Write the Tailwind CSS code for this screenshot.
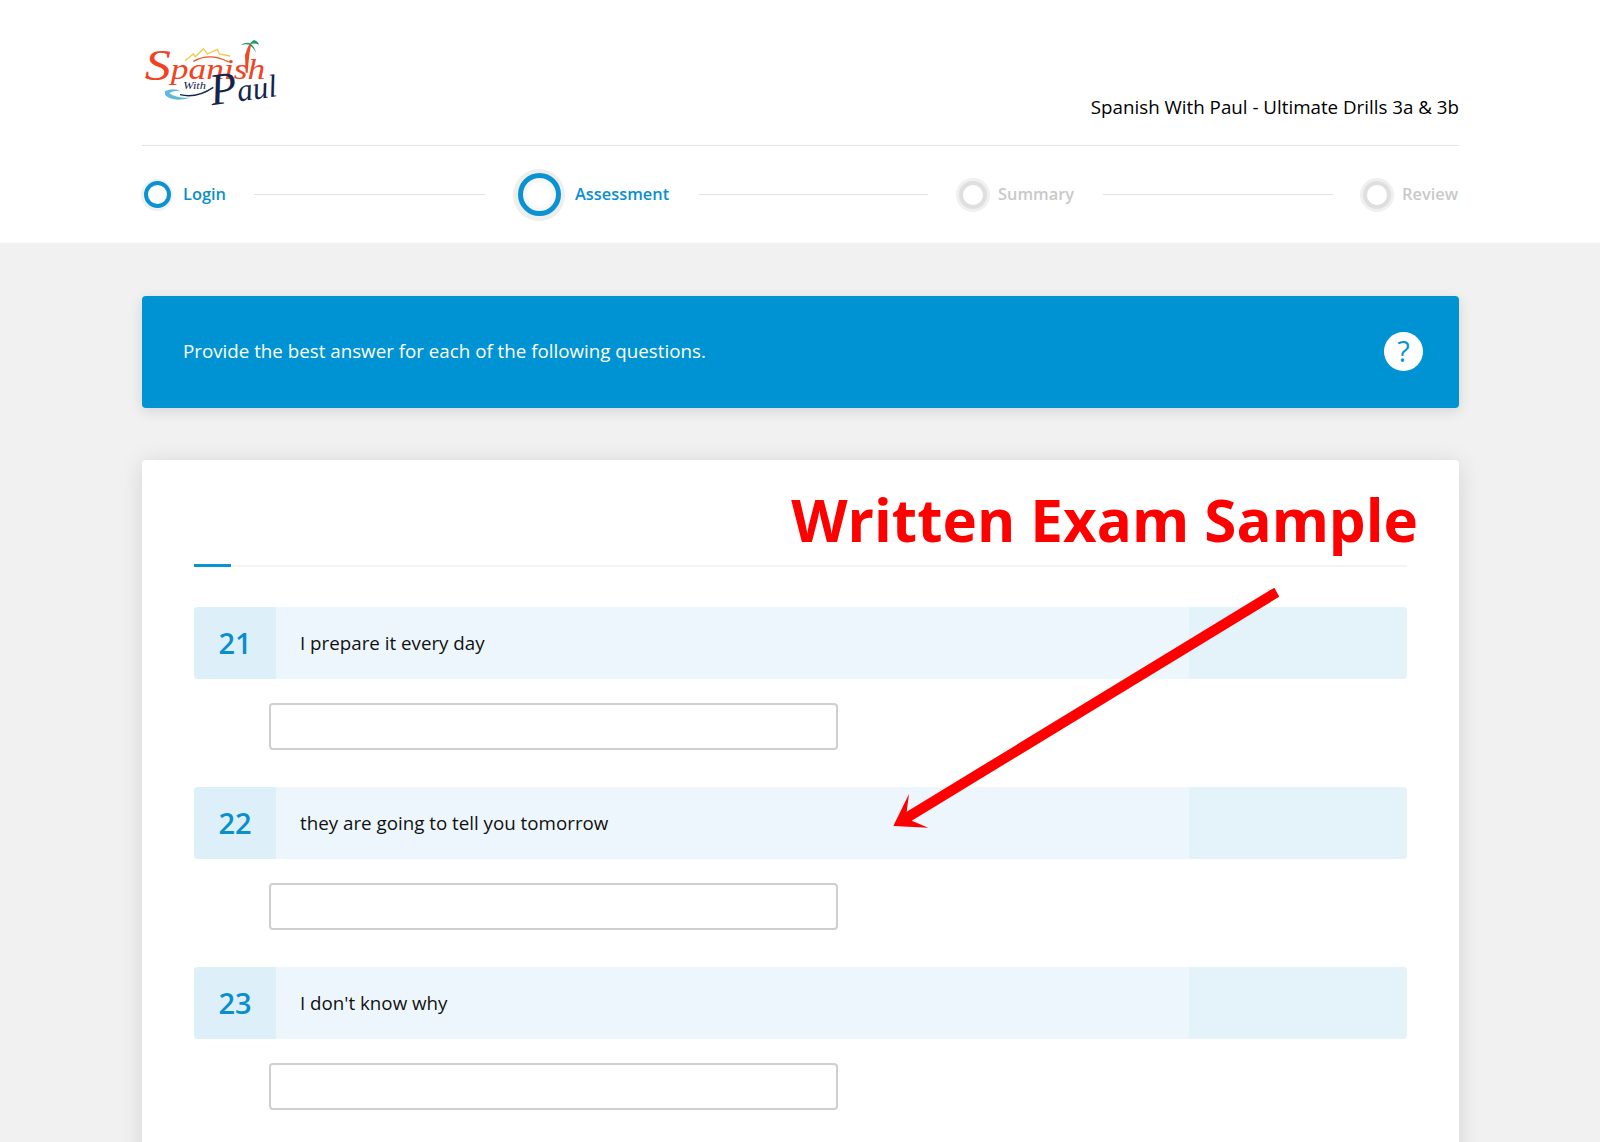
<!DOCTYPE html>
<html lang="en">
<head>
<meta charset="utf-8">
<title>Spanish With Paul</title>
<script src="https://cdn.jsdelivr.net/npm/@tailwindcss/browser@4"></script>
</head>
<body class="h-[1142px] overflow-hidden bg-[#f1f1f1] font-['Open_Sans',sans-serif] text-[#111]">
<header class="bg-white h-[243px]">
  <div class="mx-[142px] w-[1317px]">
    <div class="pt-[30px] h-[146px] border-b border-[#e3e3e3] flex justify-between">
      <svg class="w-[148px] h-[90px]" viewBox="36 0 444 270" aria-label="Spanish With Paul logo">
        <path d="M165 92 L190 72 L196 80 L220 56 L232 72 L262 58 L268 72 L300 78" fill="none" stroke="#f6c945" stroke-width="4"/>
        <path d="M190 94 Q240 66 296 96" fill="none" stroke="#e8552b" stroke-width="4"/>
        <path d="M345 75 Q352 55 359 40 L365 40 Q358 60 353 128 L347 128 Z" fill="#ee4a24"/>
        <path d="M360 40 Q345 34 331 46 Q348 40 358 44 Z M362 38 Q372 28 372 30 Q384 34 387 44 Q374 38 362 42 Z M362 42 Q374 50 378 68 Q370 52 358 46 Z" fill="#1f9a6b"/>
        <text x="44" y="150" font-family="Liberation Serif" font-style="italic" fill="#f0431f" textLength="362" lengthAdjust="spacingAndGlyphs"><tspan font-size="130">S</tspan><tspan font-size="88" dy="-4">panish</tspan></text>
        <text x="160" y="178" font-family="Liberation Serif" font-style="italic" font-size="28" fill="#14254d" textLength="68" lengthAdjust="spacingAndGlyphs">With</text>
        <text x="246" y="226" font-family="Liberation Serif" font-style="italic" fill="#14254d" textLength="200" lengthAdjust="spacingAndGlyphs" transform="rotate(-8 246 226)"><tspan font-size="135">P</tspan><tspan font-size="96">aul</tspan></text>
        <path d="M104 184 Q130 172 152 184 Q130 180 118 190 Q140 206 182 203 Q130 218 106 196 Z" fill="#5fb9d8"/>
        <path d="M150 194 Q200 206 250 172" fill="none" stroke="#14254d" stroke-width="4"/>
      </svg>
      <div class="flex items-end pb-[26px] text-[18.75px] leading-[24px] text-black">Spanish With Paul - Ultimate Drills 3a &amp; 3b</div>
    </div>
    <nav class="h-[97px] flex items-center text-[16.4px] font-semibold">
      <span class="size-[32px] rounded-full bg-[#f0f0f0] flex items-center justify-center ml-[-1px] shrink-0"><span class="size-[27px] rounded-full border-[4px] border-[#0a93d3] bg-white"></span></span>
      <span class="ml-[10px] w-[43px] pb-[1px] text-[#0a8fce]">Login</span>
      <span class="ml-[28px] w-[231px] h-px bg-[#e3e3e3]"></span>
      <span class="ml-[28px] size-[52px] rounded-full bg-[#eeeeee] flex items-center justify-center shrink-0"><span class="size-[43px] rounded-full border-[5px] border-[#0a93d3] bg-[radial-gradient(circle,#ffffff_40%,#e9e9e9_100%)]"></span></span>
      <span class="ml-[10px] w-[94px] pb-[1px] text-[#0a8fce]">Assessment</span>
      <span class="ml-[30px] w-[229px] h-px bg-[#e3e3e3]"></span>
      <span class="ml-[28px] size-[34px] rounded-full bg-[#f0f0f0] flex items-center justify-center shrink-0"><span class="size-[28px] rounded-full border-[4px] border-[#dfdfdf] bg-white"></span></span>
      <span class="ml-[8px] w-[77px] pb-[1px] text-[#c9c9c9]">Summary</span>
      <span class="ml-[28px] w-[230px] h-px bg-[#e3e3e3]"></span>
      <span class="ml-[27px] size-[34px] rounded-full bg-[#f0f0f0] flex items-center justify-center shrink-0"><span class="size-[28px] rounded-full border-[4px] border-[#dfdfdf] bg-white"></span></span>
      <span class="ml-[8px] pb-[1px] text-[#c9c9c9]">Review</span>
    </nav>
  </div>
</header>
<main class="mx-[142px] w-[1317px] pt-[53px]">
  <div class="h-[112px] rounded-[4px] bg-[#0093d3] shadow-[0_3px_14px_rgba(0,0,0,0.12)] flex items-center justify-between pl-[41px] pr-[36px] text-white text-[18.75px]">
    <span class="pb-[2px]">Provide the best answer for each of the following questions.</span>
    <span class="size-[39px] rounded-full bg-white flex items-center justify-center text-[#0a93d3] text-[29px] leading-none pb-[2px] mb-[2px]">?</span>
  </div>
  <section class="relative mt-[52px] h-[800px] bg-white rounded-[4px] shadow-[0_3px_24px_rgba(0,0,0,0.12)] px-[52px] pt-[105px]">
    <div class="relative h-[2px] bg-[#f4f4f4]"><div class="absolute left-0 top-[-1px] w-[37px] h-[3px] bg-[#0a93d3]"></div></div>
    <h1 class="absolute right-[41px] top-[20px] text-[58.3px] leading-[80px] font-bold text-[#ff0000]">Written Exam Sample</h1>

    <div class="mt-[40px] h-[72px] rounded-[4px] bg-[#edf6fc] flex items-center overflow-hidden">
      <div class="w-[82px] h-full bg-[#ddf0fa] flex items-center justify-center text-[#0a8fce] text-[29px] font-semibold">21</div>
      <div class="pl-[24px] flex-1 text-[18.75px]">I prepare it every day</div>
      <div class="w-[218px] h-full bg-[#e4f3fa]"></div>
    </div>
    <div class="ml-[75px] mt-[24px] w-[569px] h-[47px] rounded-[4px] border-2 border-[#cfcfcf] bg-white"></div>

    <div class="mt-[37px] h-[72px] rounded-[4px] bg-[#edf6fc] flex items-center overflow-hidden">
      <div class="w-[82px] h-full bg-[#ddf0fa] flex items-center justify-center text-[#0a8fce] text-[29px] font-semibold">22</div>
      <div class="pl-[24px] flex-1 text-[18.75px]">they are going to tell you tomorrow</div>
      <div class="w-[218px] h-full bg-[#e4f3fa]"></div>
    </div>
    <div class="ml-[75px] mt-[24px] w-[569px] h-[47px] rounded-[4px] border-2 border-[#cfcfcf] bg-white"></div>

    <div class="mt-[37px] h-[72px] rounded-[4px] bg-[#edf6fc] flex items-center overflow-hidden">
      <div class="w-[82px] h-full bg-[#ddf0fa] flex items-center justify-center text-[#0a8fce] text-[29px] font-semibold">23</div>
      <div class="pl-[24px] flex-1 text-[18.75px]">I don't know why</div>
      <div class="w-[218px] h-full bg-[#e4f3fa]"></div>
    </div>
    <div class="ml-[75px] mt-[24px] w-[569px] h-[47px] rounded-[4px] border-2 border-[#cfcfcf] bg-white"></div>

    <svg class="absolute left-[738px] top-[120px] w-[410px] h-[260px]" viewBox="880 580 410 260" aria-hidden="true">
      <polygon fill="#ff0000" points="1274.3,587.7 1279.3,596.7 911.7,820.7 928.3,827.7 893.3,826 909,794 906.7,811.7"/>
    </svg>
  </section>
</main>
</body>
</html>
